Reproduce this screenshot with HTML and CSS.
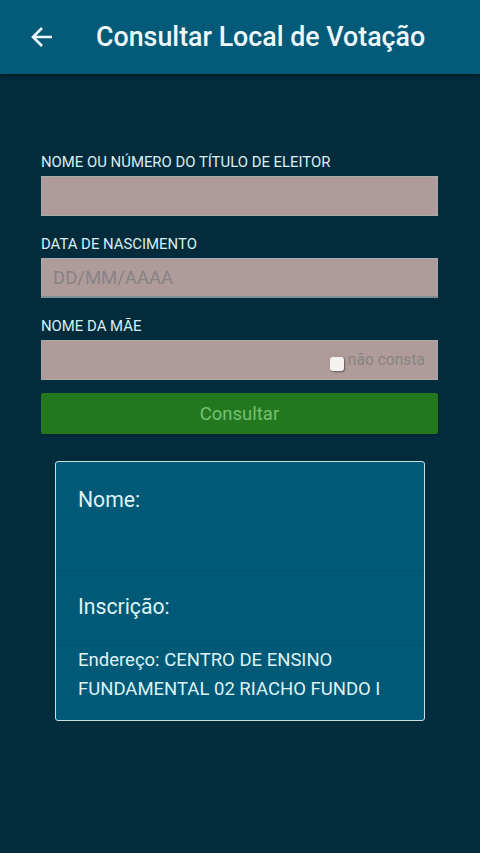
FILE: index.html
```html
<html>
  <head>
    <meta charset="utf-8">
    <link rel="stylesheet" href="styles.css">
  </head>
  <body>
    <div class="Header">
      <svg class="BackIcon" width="24" height="22" viewBox="0 0 24 22"><path d="M22 11H3M12 2L3 11l9 9" fill="none" stroke="#eef8fa" stroke-width="2.6"/></svg>
      <span class="Title">Consultar Local de Votação</span>
    </div>

    <div class="Form">
      <div class="Field">
        <label class="Label">NOME OU NÚMERO DO TÍTULO DE ELEITOR</label>
        <div class="Input"></div>
      </div>
      <div class="Field">
        <label class="Label">DATA DE NASCIMENTO</label>
        <div class="Input Date"><span class="Placeholder">DD/MM/AAAA</span></div>
      </div>
      <div class="Field">
        <label class="Label">NOME DA MÃE</label>
        <div class="Input Mother">
          <span class="Check"></span><span class="CheckText">não consta</span>
        </div>
      </div>
      <div class="Button">Consultar</div>
    </div>

    <div class="Card">
      <div class="Row RowName">Nome:</div>
      <div class="Row RowInsc">Inscrição:</div>
      <div class="Row RowAddr">Endereço: CENTRO DE ENSINO FUNDAMENTAL 02 RIACHO FUNDO I</div>
    </div>
  </body>
</html>
```

FILE: styles.css
```css
body{
    margin: 0;
    background-color: #022c3c;
    font-family: Roboto, "Liberation Sans", sans-serif;
    color: #dff3f6;
}

.Header
{
    height: 74px;
    background-color: #035b79;
    display: flex;
    align-items: center;
    box-shadow: 0 2px 4px rgba(0, 0, 0, 0.4);
}

.BackIcon
{
    margin-left: 30px;
    margin-right: 42px;
}

.Title
{
    font-size: 26.8px;
    font-weight: 500;
    color: #eef8fa;
}

.Form
{
    padding: 79px 42px 0 41px;
}

.Field
{
    margin-bottom: 19px;
}

.Field:nth-child(3)
{
    margin-bottom: 13px;
}

.Label
{
    display: block;
    font-size: 14.9px;
    line-height: 18px;
    margin-bottom: 5px;
    color: #dcf0f3;
}

.Input
{
    height: 40px;
    box-sizing: border-box;
    background-color: #b09b9b;
    border: 1px solid #a7a9ab;
    display: flex;
    align-items: center;
}

.Date
{
    border-bottom: 2px solid #7d8e97;
}

.Placeholder
{
    font-size: 18.5px;
    color: #878383;
    margin-left: 11px;
}

.Mother
{
    justify-content: flex-end;
    padding-right: 12px;
}

.Check
{
    width: 14px;
    height: 14px;
    border-radius: 3px;
    background-color: #f6f1f1;
    box-shadow: 1px 1px 2px rgba(0, 0, 0, 0.45);
    margin-right: 4px;
    margin-top: 8px;
}

.CheckText
{
    font-size: 15.6px;
    color: #8a8585;
}

.Button
{
    height: 41px;
    background-color: #23781f;
    border-radius: 2px;
    color: #74c271;
    font-size: 18.5px;
    display: flex;
    align-items: center;
    justify-content: center;
    box-shadow: 0 1px 2px rgba(0, 0, 0, 0.3);
}

.Card
{
    margin: 27px 55px 0 55px;
    border: 1px solid #c9dde4;
    border-radius: 3px;
    background-color: #005a77;
}

.Row
{
    padding-left: 22px;
    padding-right: 22px;
    border-bottom: 1px solid #04506a;
}

.RowName
{
    font-size: 21.2px;
    line-height: 28px;
    padding-top: 24px;
    height: 84px;
}

.RowInsc
{
    font-size: 21.2px;
    line-height: 28px;
    padding-top: 22px;
    height: 52px;
}

.RowAddr
{
    font-size: 18.5px;
    line-height: 29px;
    padding-top: 0;
    padding-bottom: 16px;
    border-bottom: none;
}
```
